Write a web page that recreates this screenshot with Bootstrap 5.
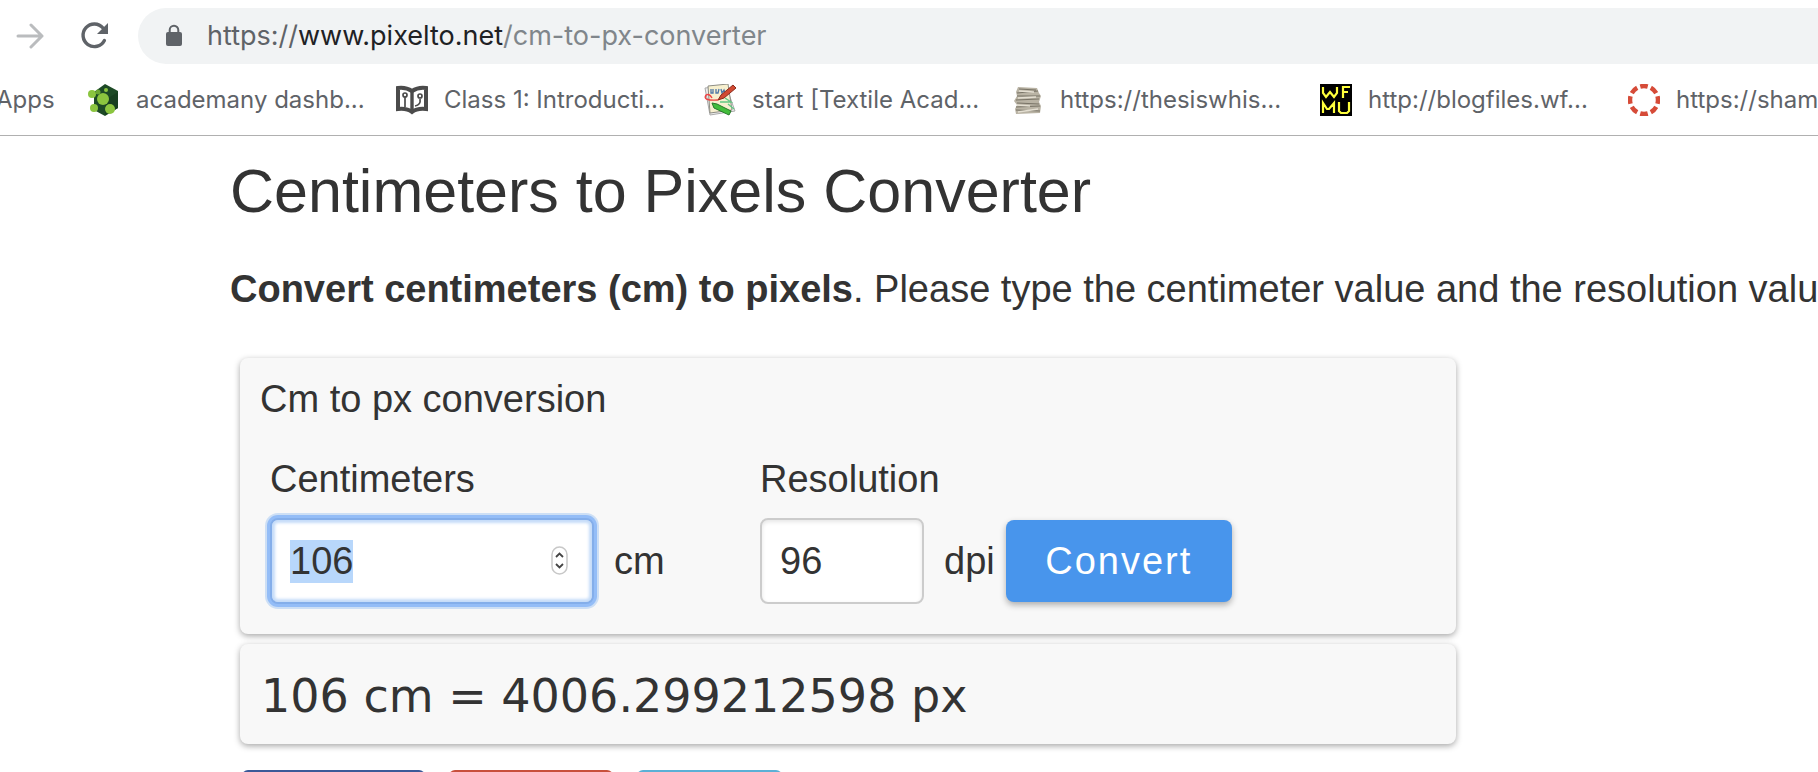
<!DOCTYPE html>
<html lang="en">
<head>
<meta charset="utf-8">
<meta name="viewport" content="width=device-width, initial-scale=1">
<title>Centimeters to Pixels Converter</title>
<link href="https://cdn.jsdelivr.net/npm/bootstrap@5.3.0/dist/css/bootstrap.min.css" rel="stylesheet">
<style>
  body { font-family: "Liberation Sans", Arial, sans-serif; font-size: 38px; line-height: 48px; color: #333; background: #fff; overflow: hidden; }
  .browser-bar { font-family: Inter, sans-serif; color: #5f6368; border-bottom: 1px solid #b0b0b0; line-height: 32px; }
  .tool-row { padding: 8px 0 8px 16px; }
  .icon-btn { border: 0; background: none; padding: 0; line-height: 0; color: #5f6368; }
  .icon-btn:disabled { color: #babcbe; }
  .reload-btn { margin-left: 36px; }
  .address-pill { margin-left: 28px; padding-left: 27px; height: 56px; border-radius: 28px 0 0 28px; background: #f1f3f4; font-size: 27px; }
  .address-field { margin-left: 24px; }
  .host { color: #202124; }
  .url-path { color: #80868b; }
  .bookmark-row { height: 63px; padding-bottom: 7px; font-size: 24px; overflow: hidden; }
  .bookmark-link { color: #5f6368; text-decoration: none; display: flex; align-items: center; flex-shrink: 0; gap: 16px; width: 308px; }
  .apps-link { width: 92px; margin-left: -4px; }
  .page-body { padding: 27px 0 0 230px; white-space: nowrap; overflow: hidden; }
  h1 { font-size: 61px; line-height: 56px; font-weight: 400; margin: 0 0 46px; }
  .intro { margin: 0 0 45px; }
  .panel { background: #f8f8f8; border-radius: 8px; box-shadow: 0 2px 6px rgba(0,0,0,.35); width: 1216px; margin-left: 10px; margin-bottom: 10px; }
  .convert-panel { padding: 17px 20px 30px; }
  .convert-panel h2 { font-size: 38px; line-height: 48px; font-weight: 400; margin: 0 0 32px; }
  .field-row { padding-left: 10px; }
  .field-row label { display: block; margin-bottom: 15px; }
  .cm-group { width: 490px; }
  .num-box { height: 86px; border: 2px solid #ccc; border-radius: 8px; padding: 0 18px; background: #fff; box-shadow: inset 0 2px 4px rgba(0,0,0,.1); color: #333; font-size: 38px; line-height: 44px; outline: 0; appearance: textfield; -moz-appearance: textfield; }
  .num-box::-webkit-inner-spin-button { display: none; }
  .num-box::selection { background: #b8d7fb; color: #333; }
  .cm-box { width: 324px; border-color: #84aeea; box-shadow: inset 0 0 3px 3px #c5dcf9, 0 0 0 3px #94bdf7, 0 0 0 5px #cddff5; }
  .dpi-box { width: 164px; }
  .stepper { position: absolute; right: 25px; top: 28px; }
  .unit { margin-left: 20px; }
  .convert-btn { width: 226px; height: 82px; padding: 0; margin-left: 11px; border: 0; border-radius: 8px; background: #4895ec; color: #fff; font-size: 38px; letter-spacing: 2px; box-shadow: 0 3px 6px rgba(0,0,0,.3); }
  .convert-btn:hover { background: #3b86dc; color: #fff; }
  .result-panel { display: block; padding: 25px 21px 21px; font-family: "DejaVu Sans", Verdana, sans-serif; font-size: 46px; line-height: 54px; }
  .share-row { padding: 16px 0 0 12px; gap: 24px; }
  .share-btn { height: 48px; border: 0; border-radius: 6px; }
</style>
</head>
<body>
<header class="browser-bar">
  <div class="tool-row d-flex align-items-center">
    <button class="icon-btn" type="button" disabled aria-label="Forward"><svg width="28" height="28" viewBox="0 0 28 28" fill="none" stroke="currentColor" stroke-width="3" stroke-linecap="round" stroke-linejoin="round"><path d="M2 14H26M15 3L26 14L15 25"/></svg></button>
    <button class="icon-btn reload-btn" type="button" aria-label="Reload"><svg width="30" height="30" viewBox="0 0 30 30"><path d="M24.400 19.500A11.300 11.300 0 1 1 23 7" fill="none" stroke="currentColor" stroke-width="3.4" stroke-linecap="round"/><path d="M28 2V13H17Z" fill="currentColor"/></svg></button>
    <div class="address-pill d-flex align-items-center flex-grow-1">
      <svg width="18" height="24" viewBox="0 0 18 24"><rect x="1" y="8" width="16" height="14" rx="2" fill="#5f6368"/><path d="M4.700 9V6A4.300 4.300 0 0 1 13.300 6V9" fill="none" stroke="#5f6368" stroke-width="2"/></svg>
      <div class="address-field">https://<span class="host">www.pixelto.net</span><span class="url-path">/cm-to-px-converter</span></div>
    </div>
  </div>
  <nav class="bookmark-row d-flex align-items-center text-nowrap" aria-label="Bookmarks">
    <a class="bookmark-link apps-link" href="#">Apps</a>
    <a class="bookmark-link" href="#"><svg width="32" height="32" viewBox="0 0 32 32"><path d="M17 0L30 7V24L17 32L6 26V8Z" fill="#1d4a26"/><path d="M17 16L30 8V24L17 31Z" fill="#173f20"/><g fill="#8bc53f"><circle cx="15" cy="15" r="6"/><circle cx="4" cy="10" r="4"/><circle cx="6" cy="24" r="4"/><circle cx="22" cy="25" r="5"/><circle cx="18" cy="6" r="2"/></g><circle cx="10" cy="8" r="2.5" fill="#6aa633"/></svg>academany dashb...</a>
    <a class="bookmark-link" href="#"><svg width="32" height="32" viewBox="0 0 32 32"><path d="M2 4Q10 3 16 7Q22 3 30 4V25Q21 24 16 28Q11 24 2 25Z" fill="#fff" stroke="#4b4b4b" stroke-width="4"/><path d="M16 7V28" stroke="#4b4b4b" stroke-width="3.4"/><g fill="none" stroke="#4b4b4b" stroke-width="1.7"><circle cx="9" cy="11" r="2"/><path d="M9 13V23M19 22Q25 21 24 15"/><circle cx="24" cy="12" r="2"/></g></svg>Class 1: Introducti...</a>
    <a class="bookmark-link" href="#"><svg width="32" height="32" viewBox="0 0 32 32"><path d="M1 4L22 2L31 27L6 31Z" fill="#eee" stroke="#aaa"/><path d="M4 2L24 0L28 26L6 29Z" fill="#f7f0cf" stroke="#8d8d84"/><path d="M7 5V9H9V5M12 5V9H14L15 5M17 5L18 9L20 6L21 9" fill="none" stroke="#4f78a8" stroke-width="1.3"/><path d="M14 16L17 11L29 1L32 4L20 14Z" fill="#d24a32" stroke="#8a2b1c"/><path d="M14 16Q-2 17 2 11Q5 9 8 14" fill="none" stroke="#e44" stroke-width="1.4"/><path d="M16 18H27L21 14M24 20L30 25" fill="none" stroke="#62c784" stroke-width="1.4"/><path d="M8 19L13 20L27 27L25 31L10 24Z" fill="#43bd3c" stroke="#277a2a"/></svg>start [Textile Acad...</a>
    <a class="bookmark-link" href="#"><svg width="32" height="32" viewBox="0 0 32 32"><path d="M6 3L25 4L27 9L29 12L27 18L29 22L28 29L4 30L3 25L5 21L2 17L5 12L4 8Z" fill="#b9b3a4"/><path d="M7 5L24 6M5 9L26 7M5 12L28 12M4 16L27 15M5 19L27 20M4 23L28 22M4 26L28 27" stroke="#797467" stroke-width="1.2"/><path d="M7 7L22 8M6 14L24 13M5 21L18 22M6 28L26 25" stroke="#e4dfd2" stroke-width="1.4"/></svg>https://thesiswhis...</a>
    <a class="bookmark-link" href="#"><svg width="32" height="32" viewBox="0 0 32 32"><path d="M0 0H32V32H0Z"/><path d="M3 3V9L6 13L10 8L14 13L17 9V3M23 14V3H30M23 8H28M3 29V19L7 25L9 25L14 19V29M19 18V27L21 29H27L29 27V18" fill="none" stroke="#ffff3c" stroke-width="2.2"/></svg>http://blogfiles.wf...</a>
    <a class="bookmark-link" href="#"><svg width="32" height="32" viewBox="0 0 32 32"><circle cx="16" cy="16" r="14" fill="none" stroke="#d64b38" stroke-width="4.5" pathLength="80" stroke-dasharray="7 3" stroke-dashoffset="3.5"/></svg>https://shamb...</a>
  </nav>
</header>
<main class="page-body">
  <h1>Centimeters to Pixels Converter</h1>
  <p class="intro"><strong>Convert centimeters (cm) to pixels</strong>. Please type the centimeter value and the resolution value</p>
  <form class="panel convert-panel" onsubmit="return false">
    <h2>Cm to px conversion</h2>
    <div class="field-row d-flex align-items-end">
      <div class="cm-group">
        <label for="cm">Centimeters</label>
        <div class="d-flex align-items-center">
          <div class="position-relative d-flex">
            <input class="num-box cm-box" id="cm" type="number" value="106">
            <svg class="stepper" width="18" height="30" viewBox="0 0 18 30"><rect x="1" y="1" width="15" height="27" rx="7.5" fill="#fff" stroke="#c8c8c8" stroke-width="1.5"/><path d="M5 11L8.500 7.500L12 11M5 18L8.500 21.500L12 18" fill="none" stroke="#444" stroke-width="1.8"/></svg>
          </div>
          <span class="unit">cm</span>
        </div>
      </div>
      <div>
        <label for="dpi">Resolution</label>
        <div class="d-flex align-items-center">
          <input class="num-box dpi-box" id="dpi" type="number" value="96">
          <span class="unit">dpi</span>
          <button class="btn convert-btn" type="submit">Convert</button>
        </div>
      </div>
    </div>
  </form>
  <output class="panel result-panel" for="cm dpi">106 cm = 4006.299212598 px</output>
  <div class="share-row d-flex">
    <button class="share-btn" type="button" aria-label="Facebook" style="width:183px;background:#3b5998"></button>
    <button class="share-btn" type="button" aria-label="Google" style="width:164px;background:#c8503c"></button>
    <button class="share-btn" type="button" aria-label="Twitter" style="width:145px;background:#5bb0d6"></button>
  </div>
</main>
<script src="https://cdn.jsdelivr.net/npm/bootstrap@5.3.0/dist/js/bootstrap.bundle.min.js"></script>
<script>
  const cm = document.getElementById('cm');
  cm.focus({ preventScroll: true });
  cm.select();
</script>
</body>
</html>
